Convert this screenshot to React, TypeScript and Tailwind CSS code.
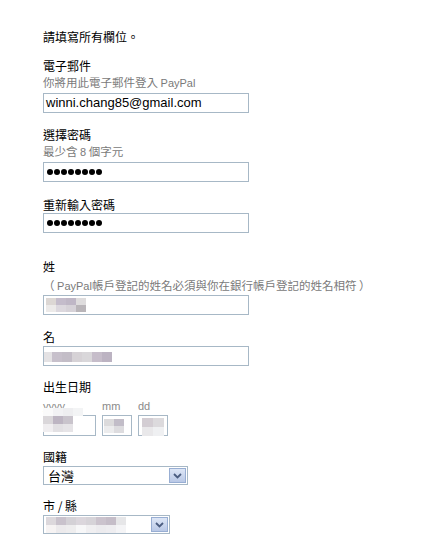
import React from "react";

const CJK = { fontFamily: '"Noto Sans CJK TC", "Noto Sans", sans-serif' };
const LAT = { fontFamily: '"Liberation Sans", Arial, sans-serif' };

function Label({ children, mt }: { children: React.ReactNode; mt: string }) {
  return (
    <div className={`${mt} h-[16px] text-[12px] leading-[16px] text-black`} style={CJK}>
      {children}
    </div>
  );
}

function Hint({ children, mt }: { children: React.ReactNode; mt: string }) {
  return (
    <div className={`${mt} h-[16px] text-[11.5px] leading-[16px] text-[#7a7a7a] whitespace-nowrap`} style={CJK}>
      {children}
    </div>
  );
}

function Box({ children, mt, w = "w-[206px]", h = "h-[20px]" }: { children?: React.ReactNode; mt: string; w?: string; h?: string }) {
  return (
    <div className={`${mt} ${w} ${h} border border-[#a7b8c6] bg-white flex items-center overflow-hidden relative`}>
      {children}
    </div>
  );
}

function Dots() {
  return (
    <div className="flex gap-[1.5px] pl-[3px]">
      {Array.from({ length: 8 }).map((_, i) => (
        <div key={i} className="w-[5.5px] h-[5.5px] rounded-full bg-black" />
      ))}
    </div>
  );
}

function Mosaic({ rows, cell = 10, rowH = 7 }: { rows: string[][]; cell?: number; rowH?: number }) {
  return (
    <div className="flex flex-col">
      {rows.map((r, i) => (
        <div key={i} className="flex">
          {r.map((c, j) => (
            <div key={j} style={{ width: cell, height: rowH, background: c }} />
          ))}
        </div>
      ))}
    </div>
  );
}

function Chevron() {
  return (
    <div className="absolute right-[1px] top-[1px] bottom-[1px] w-[17px] border border-[#98aed3] bg-gradient-to-b from-[#dde6f6] to-[#b9c8e6] flex items-center justify-center">
      <svg width="9" height="6" viewBox="0 0 9 6">
        <path d="M1 1 L4.5 4.5 L8 1" stroke="#4b5d80" strokeWidth="1.8" fill="none" />
      </svg>
    </div>
  );
}

export default function App() {
  return (
    <div className="w-[439px] h-[539px] bg-white overflow-hidden pl-[43px] pt-[29px]">
      <Label mt="mt-0">請填寫所有欄位。</Label>

      <Label mt="mt-[13px]">電子郵件</Label>
      <Hint mt="mt-0">
        你將用此電子郵件登入 <span style={LAT} className="text-[11px]">PayPal</span>
      </Hint>
      <Box mt="mt-[3px]">
        <span className="pl-[2px] text-[13px] text-black" style={LAT}>
          winni.chang85@gmail.com
        </span>
      </Box>

      <Label mt="mt-[14px]">選擇密碼</Label>
      <Hint mt="mt-0">
        最少含 <span style={LAT} className="text-[11px]">8</span> 個字元
      </Hint>
      <Box mt="mt-[3px]">
        <Dots />
      </Box>

      <Label mt="mt-[15px]">重新輸入密碼</Label>
      <Box mt="mt-0">
        <Dots />
      </Box>

      <Label mt="mt-[26px]">姓</Label>
      <Hint mt="mt-[2px]">
        （ <span style={LAT} className="text-[11px]">PayPal</span>帳戶登記的姓名必須與你在銀行帳戶登記的姓名相符 ）
      </Hint>
      <Box mt="mt-[2px]">
        <div className="pl-[2px]">
          <Mosaic
            rows={[
              ["#dcd7d4", "#c4bccb", "#bfb7c6", "#dedcdd"],
              ["#eceae9", "#dcd8de", "#d6d2d8", "#b9b5b9"],
            ]}
          />
        </div>
      </Box>

      <Label mt="mt-[14px]">名</Label>
      <Box mt="mt-[1px]">
        <div className="absolute left-[-2px] top-[5px]">
          <Mosaic
            rowH={10}
            rows={[["#e4e2e4", "#c7c0cb", "#c3bdc7", "#d6d2d6", "#d9d7da", "#c6bdca", "#bcb3c2"]]}
          />
        </div>
      </Box>

      <Label mt="mt-[13px]">出生日期</Label>
      <div className="mt-[4px] flex">
        <div className="w-[59px] relative">
          <div className="h-[14px] text-[11px] leading-[14px] text-[#8a8a8a]" style={LAT}>yyyy</div>
          <Box mt="mt-[2px]" w="w-[53px]" h="h-[21px]" />
          <div className="absolute left-[0px] top-[9px]">
            <Mosaic
              cell={10}
              rowH={8}
              rows={[
                ["#fafafa", "#f2f2f4", "#eeeef0", "#f3f4f5"],
                ["#dad7da", "#bdb5c2", "#c9c4cc", "#ffffff"],
                ["#f0eef0", "#e2e0e3", "#e6e4e7", "#ffffff"],
              ]}
            />
          </div>
        </div>
        <div className="w-[36px] relative">
          <div className="h-[14px] text-[11px] leading-[14px] text-[#8a8a8a]" style={LAT}>mm</div>
          <Box mt="mt-[2px]" w="w-[30px]" h="h-[21px]" />
          <div className="absolute left-[2px] top-[20px]">
            <Mosaic cell={10} rowH={7} rows={[["#dcdbdc", "#c2bdc8"], ["#ececed", "#dddcdf"]]} />
          </div>
        </div>
        <div className="w-[30px] relative">
          <div className="h-[14px] text-[11px] leading-[14px] text-[#8a8a8a]" style={LAT}>dd</div>
          <Box mt="mt-[2px]" w="w-[30px]" h="h-[21px]" />
          <div className="absolute left-[4px] top-[19px]">
            <Mosaic cell={11} rowH={9} rows={[["#d3cdd3", "#dcdadd"], ["#e9e8ea", "#eff0f2"]]} />
          </div>
        </div>
      </div>

      <Label mt="mt-[13px]">國籍</Label>
      <Box mt="mt-[1px]" w="w-[145px]" h="h-[19px]">
        <span className="pl-[4px] text-[13px] text-black leading-none" style={CJK}>
          台灣
        </span>
        <Chevron />
      </Box>

      <Label mt="mt-[13px]">市 / 縣</Label>
      <Box mt="mt-[1px]" w="w-[127px]" h="h-[19px]">
        <div className="pl-[2px]">
          <Mosaic
            rowH={8}
            rows={[
              ["#dcd8dc", "#c9c2cc", "#d4d1d6", "#dbd6dc", "#d6d3d8", "#cbc3cd", "#c5bdc8", "#e6e6e8"],
              ["#f6f3f3", "#eceaec", "#eeedee", "#f7f7f8", "#f0eff1", "#ecebee", "#eeedf0", "#f4f4f6"],
            ]}
          />
        </div>
        <Chevron />
      </Box>
    </div>
  );
}
